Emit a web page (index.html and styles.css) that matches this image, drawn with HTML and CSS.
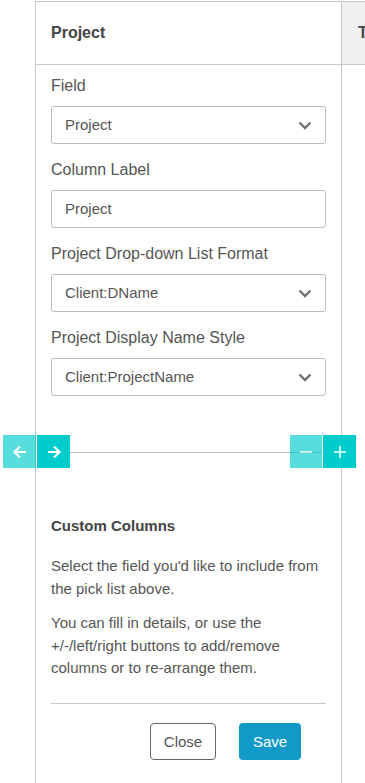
FILE: index.html
```html
<!DOCTYPE html>
<html>
<head>
    <title>Custom Columns</title>
    <link rel="stylesheet" href="styles.css">
</head>
<body>
    <div class="board">
        <div class="column">
            <div class="column-head">Project</div>
            <div class="column-body">
                <div class="field-group">
                    <label>Field</label>
                    <div class="select-wrap">
                        <select><option>Project</option></select>
                        <svg class="chevron" width="14" height="9" viewBox="0 0 14 9"><path d="M1.5 1.5 L7 7 L12.5 1.5" fill="none" stroke="#707070" stroke-width="2.4"/></svg>
                    </div>
                </div>
                <div class="field-group">
                    <label>Column Label</label>
                    <input type="text" value="Project">
                </div>
                <div class="field-group">
                    <label>Project Drop-down List Format</label>
                    <div class="select-wrap">
                        <select><option>Client:DName</option></select>
                        <svg class="chevron" width="14" height="9" viewBox="0 0 14 9"><path d="M1.5 1.5 L7 7 L12.5 1.5" fill="none" stroke="#707070" stroke-width="2.4"/></svg>
                    </div>
                </div>
                <div class="field-group">
                    <label>Project Display Name Style</label>
                    <div class="select-wrap">
                        <select><option>Client:ProjectName</option></select>
                        <svg class="chevron" width="14" height="9" viewBox="0 0 14 9"><path d="M1.5 1.5 L7 7 L12.5 1.5" fill="none" stroke="#707070" stroke-width="2.4"/></svg>
                    </div>
                </div>

                <div class="mover">
                    <button class="move-btn disabled">
                        <svg width="14" height="14" viewBox="0 0 14 14"><path d="M13 7H2 M7 1.5 L1.5 7 L7 12.5" fill="none" stroke="#fff" stroke-width="2.2"/></svg>
                    </button>
                    <button class="move-btn">
                        <svg width="14" height="14" viewBox="0 0 14 14"><path d="M1 7H12 M7 1.5 L12.5 7 L7 12.5" fill="none" stroke="#fff" stroke-width="2.2"/></svg>
                    </button>
                    <div class="mover-space"></div>
                    <button class="move-btn narrow disabled">
                        <svg width="14" height="14" viewBox="0 0 14 14"><path d="M1 7H13" fill="none" stroke="#fff" stroke-width="1.6"/></svg>
                    </button>
                    <button class="move-btn">
                        <svg width="14" height="14" viewBox="0 0 14 14"><path d="M1 7H13 M7 1V13" fill="none" stroke="#fff" stroke-width="1.6"/></svg>
                    </button>
                </div>

                <div class="help">
                    <h3>Custom Columns</h3>
                    <p>Select the field you'd like to include from the pick list above.</p>
                    <p>You can fill in details, or use the +/-/left/right buttons to add/remove columns or to re-arrange them.</p>
                </div>

                <div class="actions">
                    <button class="btn btn-close">Close</button>
                    <button class="btn btn-save">Save</button>
                </div>
            </div>
        </div>
        <div class="column-next">
            <div class="column-head">T</div>
        </div>
    </div>
</body>
</html>
```

FILE: styles.css
```css
* {
    box-sizing: border-box;
}
body {
    margin: 0;
    background: #fff;
    font-family: 'Liberation Sans', Arial, sans-serif;
    color: #555;
}
.board {
    display: flex;
    min-height: 100vh;
    padding-top: 1px;
    padding-left: 35px;
    overflow: hidden;
}
.column {
    width: 307px;
    flex-shrink: 0;
    border: 1px solid #c8c8c8;
    border-bottom: none;
}
.column-head {
    height: 63px;
    display: flex;
    align-items: center;
    padding-left: 15px;
    border-bottom: 1px solid #c8c8c8;
    font-size: 16px;
    font-weight: bold;
    color: #444;
}
.column-next {
    flex: 1;
    border-top: 1px solid #c8c8c8;
}
.column-next .column-head {
    background: #f0f0f2;
    padding-left: 16px;
}
.column-body {
    padding: 10px 15px 0;
}
.field-group {
    margin-bottom: 15px;
}
.field-group label {
    display: block;
    font-size: 16px;
    line-height: 22px;
    margin-bottom: 9px;
}
.field-group input, .field-group select {
    width: 100%;
    height: 38px;
    border: 1px solid #bbb;
    border-radius: 3px;
    padding: 0 13px 1px;
    background: #fff;
    font-family: 'Liberation Sans', Arial, sans-serif;
    font-size: 15px;
    color: #555;
    appearance: none;
    -webkit-appearance: none;
    outline: none;
}
.select-wrap {
    position: relative;
}
.chevron {
    position: absolute;
    right: 14px;
    top: 15px;
    pointer-events: none;
}
.mover {
    display: flex;
    gap: 1px;
    height: 33px;
    margin: 39px -30px 0 -48px;
    background-image: linear-gradient(#bbb, #bbb);
    background-repeat: no-repeat;
    background-position: 67px 17px;
    background-size: 252px 1px;
}
.mover-space {
    flex: 1;
}
.move-btn {
    width: 33px;
    height: 33px;
    border: none;
    padding: 0;
    background: #00cccc;
    display: flex;
    align-items: center;
    justify-content: center;
    cursor: pointer;
}
.move-btn.narrow {
    width: 32px;
}
.move-btn.disabled {
    opacity: 0.65;
    cursor: default;
}
.help {
    margin-top: 47px;
    padding-bottom: 23px;
    border-bottom: 1px solid #c8c8c8;
}
.help h3 {
    margin: 0 0 19px;
    font-size: 15px;
    line-height: 21px;
    color: #444;
}
.help p {
    margin: 0 0 12px;
    font-size: 15px;
    line-height: 22.5px;
}
.help p:last-child {
    margin-bottom: 0;
}
.actions {
    display: flex;
    justify-content: flex-end;
    gap: 23px;
    margin-top: 19px;
    padding-right: 25px;
}
.btn {
    height: 37px;
    border-radius: 4px;
    font-family: 'Liberation Sans', Arial, sans-serif;
    font-size: 15px;
    cursor: pointer;
}
.btn-close {
    width: 66px;
    background: #fff;
    border: 1px solid #666;
    color: #555;
}
.btn-save {
    width: 62px;
    background: #1199c8;
    border: none;
    color: #fff;
}
```
